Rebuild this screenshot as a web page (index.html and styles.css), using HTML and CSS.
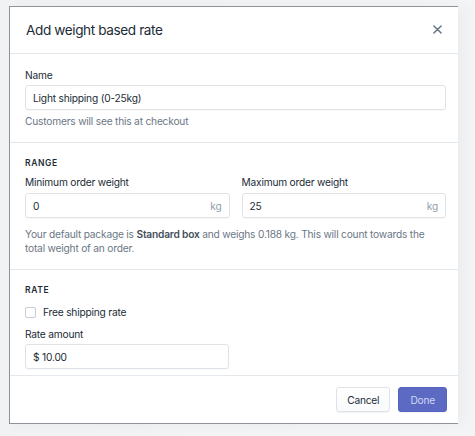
FILE: index.html
```html
<!DOCTYPE html>
<html>
<head>
<meta charset="utf-8">
<link rel="stylesheet" href="styles.css">
</head>
<body>
<div class="stage">
  <div class="modal">
    <div class="modal-header">
      <h1 class="title">Add weight based rate</h1>
      <svg class="close" width="9" height="9" viewBox="0 0 10 10"><path d="M1 1L9 9M9 1L1 9" stroke="#637381" stroke-width="1.6" stroke-linecap="round"/></svg>
    </div>
    <div class="modal-body">
      <section class="section">
        <label class="label">Name</label>
        <div class="input"><span class="value">Light shipping (0-25kg)</span></div>
        <p class="help">Customers will see this at checkout</p>
      </section>
      <section class="section">
        <h2 class="heading">Range</h2>
        <div class="two-col">
          <div class="field">
            <label class="label">Minimum order weight</label>
            <div class="input"><span class="value">0</span><span class="suffix">kg</span></div>
          </div>
          <div class="field">
            <label class="label">Maximum order weight</label>
            <div class="input"><span class="value">25</span><span class="suffix">kg</span></div>
          </div>
        </div>
        <p class="help help-long">Your default package is <strong>Standard box</strong> and weighs 0.188 kg. This will count towards the total weight of an order.</p>
      </section>
      <section class="section section-last">
        <h2 class="heading">Rate</h2>
        <div class="check-row"><span class="checkbox"></span><span class="check-label">Free shipping rate</span></div>
        <label class="label label-rate">Rate amount</label>
        <div class="input input-half"><span class="value">$ 10.00</span></div>
      </section>
    </div>
    <div class="modal-footer">
      <button class="btn">Cancel</button>
      <button class="btn btn-primary">Done</button>
    </div>
  </div>
</div>
</body>
</html>
```
FILE: styles.css
```css
* { box-sizing: border-box; }
html, body { margin: 0; padding: 0; }
body {
  width: 475px;
  height: 436px;
  overflow: hidden;
  background: #f3f4f5;
  font-family: Inter, "Noto Sans", sans-serif;
  color: #212b36;
  font-size: 10.2px;
  letter-spacing: -0.2px;
}
.stage {
  padding: 6px 0 0 9px;
  height: 436px;
  background: linear-gradient(to right, #f1f2f3 0, #f4f5f6 95%, #f3f4f5 100%);
}
.modal {
  width: 449px;
  height: 418px;
  background: #fff;
  border-top: 1px solid #8e9299;
  border-left: 1px solid #8e9299;
  border-bottom: 1px solid #8e9299;
  display: flex;
  flex-direction: column;
  box-shadow: 6px 0 14px rgba(0,0,0,0.04);
}
.modal-header {
  height: 47px;
  display: flex;
  align-items: center;
  justify-content: space-between;
  padding: 0 15px 0 16px;
  border-bottom: 1px solid #e4e7eb;
  flex: none;
}
.title {
  margin: 0 0 1px;
  font-size: 13.6px;
  letter-spacing: -0.4px;
  font-weight: 400;
  color: #212b36;
}
.close { margin-right: 1px; margin-bottom: 2px; }
.modal-body {
  flex: 1;
  overflow: hidden;
  min-height: 0;
}
.section {
  padding: 14px 12px 14px 15px;
  border-bottom: 1px solid #e4e7eb;
}
.section-last { border-bottom: none; }
.label {
  display: block;
  line-height: 14px;
  margin-bottom: 3px;
  color: #212b36;
}
.input {
  height: 25px;
  border: 1px solid #dfe3e8;
  border-radius: 3px;
  display: flex;
  align-items: center;
  justify-content: space-between;
  padding: 0 7px;
  box-shadow: 0 1px 0 rgba(22,29,37,0.03);
}
.value { color: #212b36; }
.suffix { color: #919eab; }
.help {
  margin: 4px 0 0;
  line-height: 14px;
  color: #6b7785;
}
.help strong { color: #454f5b; font-weight: 600; }
.help-long { margin-top: 10px; line-height: 13.5px; }
.heading {
  margin: 0 0 6px;
  font-size: 8.5px;
  line-height: 12px;
  font-weight: 600;
  letter-spacing: 0.6px;
  text-transform: uppercase;
  color: #212b36;
}
.two-col {
  display: grid;
  grid-template-columns: 1fr 1fr;
  gap: 12px;
}
.field .label { margin-bottom: 4px; }
.check-row {
  display: flex;
  align-items: center;
  gap: 7px;
  height: 14px;
  margin-top: 9px;
}
.checkbox {
  width: 11px;
  height: 11px;
  border: 1px solid #c4cdd5;
  border-radius: 2px;
  background: #fff;
}
.check-label { color: #212b36; }
.label-rate { margin-top: 8px; margin-bottom: 3px; }
.input-half { width: 204px; }
.modal-footer {
  flex: none;
  height: 48px;
  border-top: 1px solid #e4e7eb;
  display: flex;
  justify-content: flex-end;
  align-items: center;
  gap: 8px;
  padding: 0 11px 0 0;
}
.btn {
  height: 25px;
  font-family: inherit;
  font-size: 10.2px;
  letter-spacing: -0.2px;
  border-radius: 3px;
  border: 1px solid #dfe3e8;
  background: linear-gradient(#fff, #f9fafb);
  color: #212b36;
  padding: 0 10px;
  box-shadow: 0 1px 0 rgba(22,29,37,0.05);
}
.btn-primary {
  background: #5c6ac4;
  border-color: #5563c1;
  color: #d4d8f3;
  padding: 0 11px;
}
```
